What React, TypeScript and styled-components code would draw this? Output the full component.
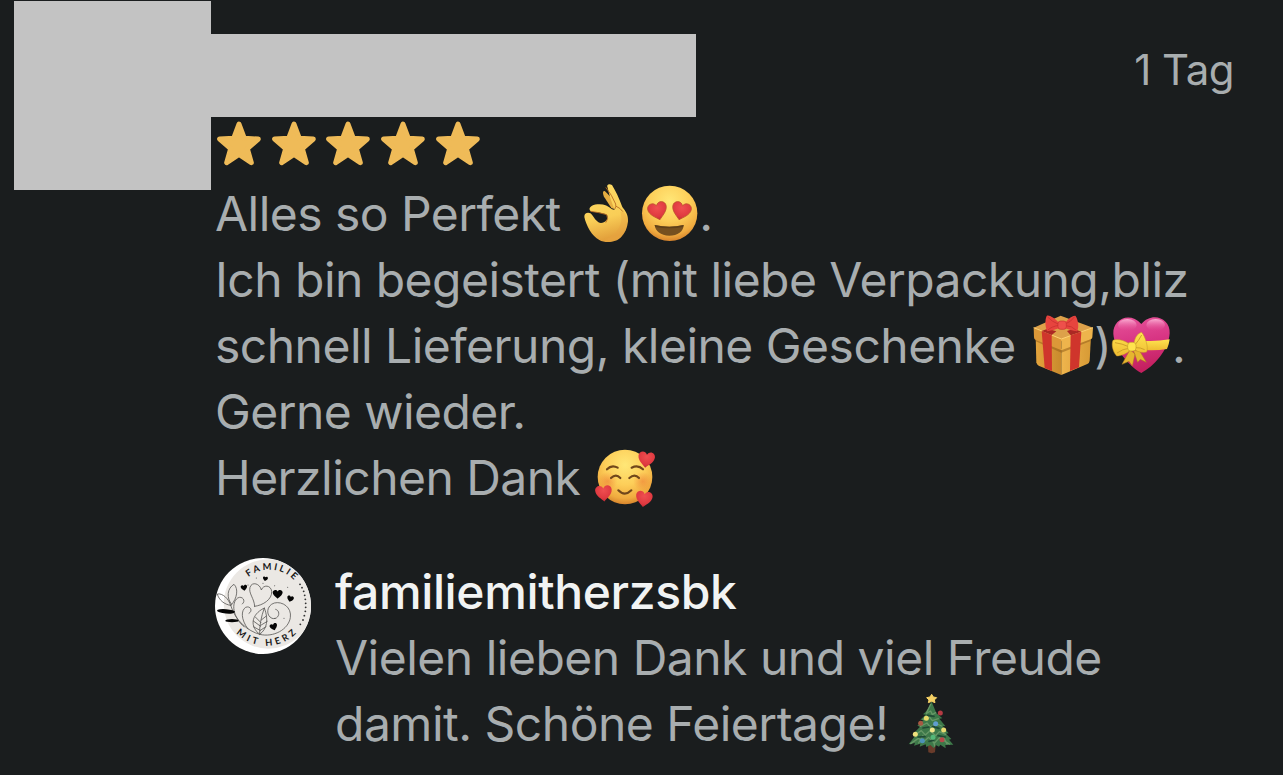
import React from 'react';
import styled, { createGlobalStyle } from 'styled-components';

const GlobalStyle = createGlobalStyle`
  * { box-sizing: border-box; }
  body { margin: 0; background: #1a1d1e; }
`;

const Page = styled.main`
  width: 1283px;
  height: 775px;
  overflow: hidden;
  background: #1a1d1e;
  color: #a8adaf;
  font-family: Inter, sans-serif;
  font-size: 48px;
  line-height: 66px;
`;

const Review = styled.article`
  display: flex;
  align-items: flex-start;
  padding: 1px 49px 0 14px;
`;

const HiddenAvatar = styled.div`
  flex: none;
  width: 197px;
  height: 189px;
  background: #c3c3c3;
`;

const Body = styled.div`
  flex: 1;
  min-width: 0;
`;

const Header = styled.header`
  display: flex;
  justify-content: space-between;
  align-items: flex-start;
  padding-top: 33px;
`;

const HiddenName = styled.div`
  width: 484.5px;
  height: 83px;
  background: #c3c3c3;
`;

const Age = styled.time`
  margin-top: 3px;
  font-size: 42px;
  letter-spacing: -0.5px;
`;

const Stars = styled.div`
  display: flex;
  gap: 10.7px;
  height: 64px;
  padding: 4px 0 0 6px;
`;

const StarIcon = styled.svg`
  flex: none;
  width: 44px;
  height: 46px;
`;

const Comment = styled.div`
  padding-left: 4px;
`;

const Line = styled.div`
  display: flex;
  align-items: center;
  height: 66px;
  white-space: pre;
`;

const Words = styled.span<{ $track?: number }>`
  letter-spacing: ${(p) => p.$track ?? -0.54}px;
`;

const Emoji = styled.svg<{ $w: number; $gap?: number }>`
  flex: none;
  display: block;
  width: ${(p) => p.$w}px;
  height: 64px;
  margin-left: ${(p) => p.$gap ?? 0}px;
  overflow: visible;
`;

const Reply = styled.section`
  display: flex;
  gap: 24px;
  padding: 47px 0 0 4px;
`;

const ShopAvatar = styled.svg`
  flex: none;
  width: 96px;
  height: 96px;
`;

const ReplyBody = styled.div`
  flex: 1;
  padding-top: 1px;
`;

const ShopName = styled.div`
  height: 66px;
  color: #f1f3f3;
  font-weight: 500;
  letter-spacing: -0.37px;
`;

const HEART = 'M0 26C-8 18-27 7-27-9C-27-22-8-29 0-14C8-29 27-22 27-9C27 7 8 18 0 26Z';

const Star = () => (
  <StarIcon viewBox="0 0 132 138">
    <path
      d="M66 9L82 52L124 54L91 83L103 125L66 100L29 125L41 83L8 54L50 52Z"
      fill="#efbb58" stroke="#efbb58" strokeWidth="15" strokeLinejoin="round"
    />
  </StarIcon>
);

const OkHand = () => (
  <Emoji $w={61} $gap={2.5} viewBox="18 21 183 192">
    <defs>
      <linearGradient id="hand" x1="0" y1="0" x2="0.2" y2="1">
        <stop offset="0" stopColor="#ffdc65" />
        <stop offset="0.65" stopColor="#f9ce57" />
        <stop offset="1" stopColor="#e3a13c" />
      </linearGradient>
    </defs>
    <path d="M105 49C98 45 97 57 103 67L124 99L139 104L134 78Z" fill="#e6ae42" />
    <path
      fillRule="evenodd" fill="url(#hand)"
      d="M113 38C108 29 117 24 126 30C136 46 147 69 157 96C168 110 175 120 174 139C172 159 165 174 153 187C139 203 105 205 88 195C66 184 49 153 43 126C42 111 61 110 67 121C74 131 82 144 93 144C105 144 117 133 111 120C98 112 77 113 62 109C52 99 66 89 82 88C99 86 114 92 126 103L134 105C126 84 117 59 113 38Z"
    />
    <path d="M108 38Q126 60 137 87Q139 94 135 101M63 109Q86 112 110 119Q117 131 108 142M139 94Q151 99 158 109" fill="none" stroke="#b76a21" strokeWidth="2.6" strokeLinecap="round" />
    <path d="M151 111C162 142 145 181 104 192C132 203 157 192 167 166C175 147 174 121 159 109Z" fill="#e8a342" opacity=".35" />
  </Emoji>
);

const HeartEyes = () => (
  <Emoji $w={59} $gap={3} viewBox="210 21 177 192">
    <defs>
      <radialGradient id="sun" cx="0.5" cy="0.28" r="0.76">
        <stop offset="0" stopColor="#ffe777" />
        <stop offset="0.48" stopColor="#fdce59" />
        <stop offset="0.8" stopColor="#f0ab3f" />
        <stop offset="1" stopColor="#ce7626" />
      </radialGradient>
      <radialGradient id="red" cx="0.5" cy="0.3" r="0.75">
        <stop offset="0" stopColor="#ef4e50" />
        <stop offset="0.65" stopColor="#df3940" />
        <stop offset="1" stopColor="#b82732" />
      </radialGradient>
    </defs>
    <circle cx="299" cy="115" r="83" fill="url(#sun)" />
    <path d={HEART} transform="translate(263 107) rotate(-14) scale(1.05 1.08)" fill="url(#red)" stroke="#ba542c" strokeWidth="2" />
    <path d={HEART} transform="translate(334 107) rotate(14) scale(1.05 1.08)" fill="url(#red)" stroke="#ba542c" strokeWidth="2" />
    <path d="M254 150Q298 161 341 150C341 169 323 182 298 182C272 182 256 168 254 150Z" fill="#76501f" />
    <path d="M254 150Q298 161 341 150Q340 154 339 156Q299 164 256 156Z" fill="#604019" />
  </Emoji>
);

const Gift = () => (
  <Emoji $w={62} $gap={3.5} viewBox="33 42 186 192">
    <defs>
      <linearGradient id="box"><stop stopColor="#e4a43c" /><stop offset="1" stopColor="#c88a2d" /></linearGradient>
      <linearGradient id="boxr"><stop stopColor="#efb54d" /><stop offset="1" stopColor="#d79a35" /></linearGradient>
    </defs>
    <path d="M44 109L121 147V225L53 197Q47 194 46 187Z" fill="url(#box)" />
    <path d="M121 147L210 107L206 182Q205 189 199 192L121 225Z" fill="url(#boxr)" />
    <path d="M38 83L119 47L216 83L121 124Z" fill="#dda14a" />
    <path d="M38 83L121 117V151L43 119Q39 117 39 112Z" fill="#dc9838" />
    <path d="M121 117L216 83L214 112Q214 116 209 118L121 151Z" fill="#eeb44c" />
    <path d="M43 119L121 151L209 118V123L121 158L44 124Z" fill="#96601c" opacity=".55" />
    <path d="M38 83L121 117L216 83" fill="none" stroke="#ffd272" strokeWidth="3" />
    <path d="M62 93L92 105L93 213L71 204Z" fill="#cf352c" />
    <path d="M149 106L181 95L174 202L147 213Z" fill="#cf352c" />
    <path d="M62 93L80 86L106 94L92 105Z M149 106L181 95L158 86L138 93Z" fill="#ab2823" />
    <path d="M114 69C99 52 82 43 77 48C71 60 73 84 79 94C93 91 107 87 117 84L130 84C143 87 156 93 168 94C175 84 172 58 163 47C148 48 139 61 133 68Z" fill="#e7443e" />
    <path d="M80 51Q91 64 113 73M80 91Q91 79 115 76M161 50Q151 65 133 72M166 91Q152 77 134 77" fill="none" stroke="#cf3433" strokeWidth="3" />
    <rect x="111" y="63" width="25" height="25" rx="8" fill="#ee504b" stroke="#c9302f" strokeWidth="2" />
  </Emoji>
);

const RibbonHeart = () => (
  <Emoji $w={61} viewBox="270 42 183 192">
    <defs>
      <linearGradient id="pink" x1="0" y1="0" x2="0.2" y2="1">
        <stop offset="0" stopColor="#e7559b" /><stop offset="0.5" stopColor="#d83584" /><stop offset="1" stopColor="#c4205f" />
      </linearGradient>
      <linearGradient id="shine" x1="0" y1="0" x2="0" y2="1">
        <stop stopColor="#ffc4e0" /><stop offset="1" stopColor="#e9539c" stopOpacity="0" />
      </linearGradient>
      <linearGradient id="yellow" x1="0" y1="0" x2="0" y2="1"><stop stopColor="#ffe450" /><stop offset="1" stopColor="#eebc31" /></linearGradient>
    </defs>
    <path d="M361 219C327 199 280 150 277 101C275 59 325 33 361 72C393 32 449 55 446 100C443 150 398 200 361 219Z" fill="url(#pink)" />
    <ellipse cx="319" cy="75" rx="28" ry="18" fill="url(#shine)" opacity=".8" />
    <ellipse cx="404" cy="75" rx="28" ry="18" fill="url(#shine)" opacity=".8" />
    <path d="M365 122Q403 125 446 118Q444 134 438 147Q405 153 365 150Z" fill="url(#yellow)" />
    <path d="M327 149L303 193L324 184L334 198L342 162ZM337 151L350 187L358 178L376 187L356 153Z" fill="#e6b52f" stroke="#a97a1f" strokeWidth="1.5" />
    <path d="M326 132C307 119 285 116 276 121C270 134 276 157 287 168C301 167 317 162 329 149L342 150C354 157 367 159 377 156C383 142 373 110 362 97C349 100 341 114 339 130Z" fill="url(#yellow)" stroke="#c29224" strokeWidth="1.5" />
    <path d="M282 128Q304 131 323 140M288 159Q305 147 323 145M362 105Q353 122 343 133M371 149Q358 142 344 143" fill="none" stroke="#cfa02a" strokeWidth="3" />
    <rect x="320" y="127" width="25" height="26" rx="9" fill="#ffe34d" stroke="#c59b2a" strokeWidth="2" />
  </Emoji>
);

const LovedFace = () => (
  <Emoji $w={61} $gap={2} viewBox="45 33 183 192">
    <defs>
      <radialGradient id="blush"><stop stopColor="#ed7a35" stopOpacity=".55" /><stop offset="1" stopColor="#ed7a35" stopOpacity="0" /></radialGradient>
    </defs>
    <circle cx="135" cy="126" r="82" fill="url(#sun)" />
    <circle cx="83" cy="139" r="29" fill="url(#blush)" />
    <circle cx="188" cy="139" r="29" fill="url(#blush)" />
    <path d="M81 103Q95 88 113 98M155 98Q174 88 189 103M93 129Q108 115 121 129M148 129Q164 115 177 129M115 166Q134 186 154 166" fill="none" stroke="#70471b" strokeWidth="6.5" strokeLinecap="round" />
    <path d={HEART} transform="translate(199 73) rotate(8) scale(.92 .98)" fill="url(#red)" />
    <path d={HEART} transform="translate(71 174) rotate(-5) scale(.92 .98)" fill="url(#red)" />
    <path d={HEART} transform="translate(192 191) rotate(8) scale(.92 .98)" fill="url(#red)" />
  </Emoji>
);

const baubles: [number, number, string][] = [
  [151, 83, '#b43b43'], [109, 99, '#e6da69'], [92, 114, '#a75843'], [137, 115, '#609ed0'],
  [127, 134, '#f0e58b'], [161, 134, '#eadb71'], [76, 147, '#efe17d'], [129, 156, '#55b879'],
  [97, 166, '#4d91b8'], [156, 163, '#b64949'],
];

const Tree = () => (
  <Emoji $w={50} $gap={4.5} viewBox="48 20 150 192">
    <path d="M114 178H137L135 201Q125 206 115 201Z" fill="#693b2a" />
    <path d="M124 47C119 67 108 80 99 87L107 88L91 103L101 104L82 121L90 124L70 145L78 148L56 177L75 173L72 181L91 175L89 184L107 177L109 185L121 179L132 189L137 179L147 184L151 178L167 189L166 179L190 178L177 163L184 161L168 145L176 144L158 123L166 122L148 100L157 99L139 83Z" fill="#3d7849" />
    <path d="M122 57L109 84L122 77L127 88L137 82M99 103L118 95L127 106L145 100M91 123L111 113L121 125L137 114L155 122M76 148L94 136L106 149L120 136L137 151L148 139L167 147M62 175L85 159L101 169L116 156L133 174L148 157L178 176M99 150L86 173M128 158L134 182M159 153L171 176" fill="none" stroke="#669766" strokeWidth="4" strokeLinecap="round" strokeLinejoin="round" />
    <path d="M113 90L132 93M99 128L117 125M127 123L147 129M84 155L105 154M117 168L131 165M144 151L166 155" stroke="#204b35" strokeWidth="5" strokeLinecap="round" />
    {baubles.map(([x, y, c]) => <circle key={`${x}-${y}`} cx={x} cy={y} r="7.5" fill={c} />)}
    <path d="M125 27L130 35L140 37L133 44L135 52L125 48L115 52L117 44L110 37L120 35Z" fill="#f5d165" stroke="#f5d165" strokeWidth="3" strokeLinejoin="round" />
  </Emoji>
);

const miniHearts: [number, number, number, number][] = [
  [117, 113, 0.36, -8], [181, 86, 0.28, 8], [218, 132, 0.55, 0], [256, 146, 0.37, 14], [206, 230, 0.42, -18],
];

const sideDots: [number, number][] = [
  [285, 103], [291, 113], [296, 124], [299, 136], [301, 148], [302, 160], [302, 172], [301, 184], [298, 197], [294, 210], [286, 223],
];

const ShopLogo = () => (
  <ShopAvatar viewBox="30 24 288 288" role="img" aria-label="Familie mit Herz">
    <defs>
      <clipPath id="round"><circle cx="174" cy="168" r="144" /></clipPath>
      <path id="arcTop" d="M93 160A101 101 0 0 1 295 160" />
      <path id="arcBottom" d="M58 160A127 127 0 0 0 312 160" />
    </defs>
    <g clipPath="url(#round)">
      <rect x="30" y="24" width="288" height="288" fill="#fff" />
      <circle cx="190" cy="162" r="134" fill="#ebe8e4" />
      <g fill="none" stroke="#5d5b59" strokeWidth="2.5" strokeLinecap="round">
        <path d="M149 169C148 145 130 130 135 112C141 93 165 101 169 120C175 103 198 105 200 124C202 148 174 166 149 169Z" />
        <path d="M80 163C63 144 67 114 87 103C101 116 96 146 80 163ZM77 166C58 164 41 149 37 132C53 129 71 146 77 166Z" />
        <path d="M77 166C91 213 129 243 164 253C205 263 250 239 256 203C261 172 232 153 208 159C184 166 182 197 201 205C222 211 229 182 212 178M117 230C83 202 78 158 98 144C112 136 124 153 112 162M129 237C107 208 108 181 122 172C136 166 145 183 132 190" />
        <path d="M164 253C135 231 136 195 178 174C191 208 187 237 164 253ZM178 174C168 202 163 227 164 253M168 218L151 201M167 229L145 213M165 241L145 230M169 210L184 198M167 226L187 214M166 241L183 230" />
      </g>
      <ellipse cx="63" cy="184" rx="27" ry="6.5" transform="rotate(5 63 184)" fill="#050505" />
      <ellipse cx="81" cy="212" rx="20" ry="5" fill="#050505" />
      {miniHearts.map(([x, y, s, r]) => <path key={x} d={HEART} transform={`translate(${x} ${y}) rotate(${r}) scale(${s})`} fill="#050505" />)}
      {sideDots.map(([x, y]) => <circle key={y} cx={x} cy={y} r="2.8" fill="#333" />)}
      {[[154, 84], [129, 105], [209, 107], [248, 112], [174, 100], [210, 205], [237, 205]].map(([x, y]) => <circle key={`${x}${y}`} cx={x} cy={y} r="1.5" fill="#444" />)}
      <g fill="#171717" fontFamily="Lato, sans-serif" fontWeight="700" fontSize="28" textAnchor="middle">
        <text letterSpacing="7"><textPath href="#arcTop" startOffset="53%">FAMILIE</textPath></text>
        <text letterSpacing="10"><textPath href="#arcBottom" startOffset="51%">MIT HERZ</textPath></text>
      </g>
    </g>
  </ShopAvatar>
);

export default function App() {
  return (
    <Page>
      <GlobalStyle />
      <Review>
        <HiddenAvatar />
        <Body>
          <Header>
            <HiddenName />
            <Age>1 Tag</Age>
          </Header>
          <Stars>{[0, 1, 2, 3, 4].map((n) => <Star key={n} />)}</Stars>
          <Comment>
            <Line><Words>Alles so Perfekt </Words><OkHand /><HeartEyes /><Words>.</Words></Line>
            <Line><Words>Ich bin begeistert (mit liebe Verpackung,bliz</Words></Line>
            <Line><Words $track={-0.52}>schnell Lieferung, kleine Geschenke </Words><Gift /><Words>)</Words><RibbonHeart /><Words>.</Words></Line>
            <Line><Words>Gerne wieder.</Words></Line>
            <Line><Words>Herzlichen Dank </Words><LovedFace /></Line>
          </Comment>
          <Reply>
            <ShopLogo />
            <ReplyBody>
              <ShopName>familiemitherzsbk</ShopName>
              <Line><Words $track={-0.5}>Vielen lieben Dank und viel Freude</Words></Line>
              <Line><Words $track={-0.5}>damit. Schöne Feiertage! </Words><Tree /></Line>
            </ReplyBody>
          </Reply>
        </Body>
      </Review>
    </Page>
  );
}
